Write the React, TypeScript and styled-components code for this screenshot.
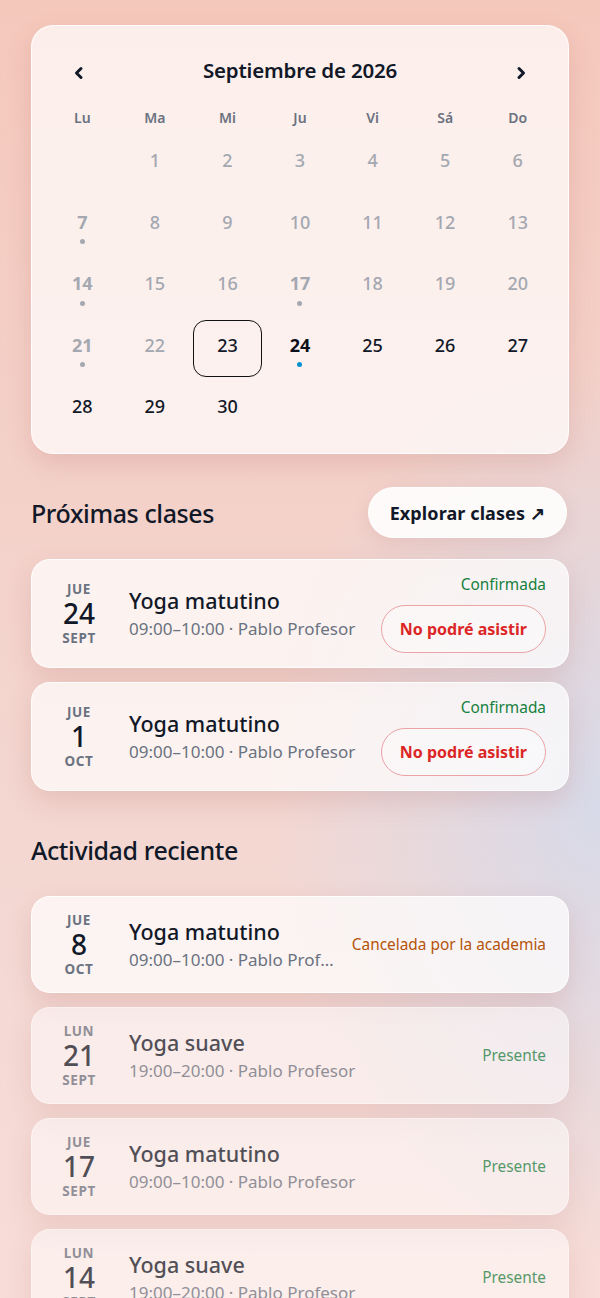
import React from "react";
import styled, { createGlobalStyle } from "styled-components";

const GlobalStyle = createGlobalStyle`
  html, body {
    margin: 0;
    padding: 0;
  }
  body {
    min-height: 100vh;
    font-family: "Noto Sans", "Open Sans", Arial, sans-serif;
    color: #111827;
    background:
      radial-gradient(ellipse 55% 35% at 100% 62%, rgba(214, 218, 234, 0.95) 0%, rgba(214, 218, 234, 0) 100%),
      linear-gradient(180deg, #f5c8bc 0%, #f3d3cc 45%, #f4d9d4 75%, #f7dcd7 100%);
    background-attachment: fixed;
  }
`;

const Page = styled.main`
  display: flex;
  flex-direction: column;
  gap: 33px;
  padding: 25px 31px 40px;
`;

const Glass = styled.section`
  background: rgba(255, 255, 255, 0.7);
  border: 1px solid rgba(255, 255, 255, 0.85);
  box-shadow: 0 10px 26px rgba(170, 90, 85, 0.18);
  box-sizing: border-box;
`;

const CalendarCard = styled(Glass)`
  border-radius: 22px;
  padding: 27px 16px 15px;
`;

const CalHeader = styled.header`
  display: flex;
  align-items: center;
  justify-content: space-between;
  height: 34px;
  padding: 0 15px;
`;

const ArrowButton = styled.button`
  width: 32px;
  height: 32px;
  margin-top: 6px;
  display: flex;
  align-items: center;
  justify-content: center;
  border: none;
  background: none;
  padding: 0;
  color: #111827;
  cursor: pointer;
`;

const MonthTitle = styled.h2`
  margin: 0;
  font-size: 20.5px;
  font-weight: 600;
  letter-spacing: -0.2px;
`;

const WeekRow = styled.div`
  display: grid;
  grid-template-columns: repeat(7, 1fr);
  column-gap: 4px;
  margin-top: 21px;
`;

const WeekDay = styled.span`
  text-align: center;
  font-size: 14px;
  font-weight: 600;
  color: #6b7280;
  line-height: 20px;
`;

const DayGrid = styled.div`
  display: grid;
  grid-template-columns: repeat(7, 1fr);
  grid-auto-rows: 57px;
  gap: 4.5px 4px;
  margin-top: 7px;
`;

type Tone = "past" | "marked" | "future" | "event";

const toneColor: Record<Tone, string> = {
  past: "#a4a8b1",
  marked: "#a4a8b1",
  future: "#111827",
  event: "#0b0f19",
};

const toneWeight: Record<Tone, number> = {
  past: 500,
  marked: 700,
  future: 500,
  event: 700,
};

const DayCell = styled.div<{ $tone: Tone; $selected?: boolean }>`
  position: relative;
  display: flex;
  align-items: center;
  justify-content: center;
  padding-bottom: 7px;
  border-radius: 13px;
  border: 1.5px solid ${(p) => (p.$selected ? "#111" : "transparent")};
  font-size: 18px;
  font-weight: ${(p) => toneWeight[p.$tone]};
  color: ${(p) => toneColor[p.$tone]};
  box-sizing: border-box;
`;

const Dot = styled.span<{ $color: string }>`
  position: absolute;
  left: 50%;
  top: calc(50% + 14px);
  width: 5px;
  height: 5px;
  margin-left: -2.5px;
  border-radius: 50%;
  background: ${(p) => p.$color};
`;

const Section = styled.section`
  display: flex;
  flex-direction: column;
  gap: 21px;
`;

const SectionHead = styled.div`
  display: flex;
  align-items: center;
  justify-content: space-between;
  min-height: 51px;
`;

const SectionTitle = styled.h2`
  margin: 0;
  font-size: 25px;
  font-weight: 500;
  letter-spacing: -0.4px;
  color: #111827;
`;

const ExploreButton = styled.button`
  height: 51px;
  padding: 0 21px;
  border-radius: 26px;
  border: 1px solid rgba(255, 255, 255, 0.9);
  background: rgba(255, 255, 255, 0.88);
  box-shadow: 0 6px 18px rgba(170, 90, 85, 0.14);
  font-family: inherit;
  font-size: 18px;
  font-weight: 700;
  letter-spacing: 0.1px;
  color: #111827;
  margin-right: 2px;
`;

const List = styled.div`
  display: flex;
  flex-direction: column;
  gap: 14px;
`;

const ClassCard = styled(Glass)<{ $faded?: boolean }>`
  display: flex;
  align-items: center;
  gap: 14px;
  border-radius: 19px;
  padding: 14px 22px 14px 20px;
  opacity: ${(p) => (p.$faded ? 0.72 : 1)};
`;

const DateCol = styled.div`
  width: 54px;
  flex: none;
  margin-right: 9px;
  display: flex;
  flex-direction: column;
  align-items: center;
`;

const DateSmall = styled.span`
  font-size: 13.5px;
  font-weight: 700;
  color: #6b7280;
  letter-spacing: 0.6px;
  line-height: 18px;
`;

const DateBig = styled.span`
  font-size: 28px;
  font-weight: 500;
  color: #111827;
  line-height: 31px;
`;

const Info = styled.div`
  flex: 1;
  min-width: 0;
  display: flex;
  flex-direction: column;
  gap: 2px;
`;

const ClassTitle = styled.span`
  font-size: 21.5px;
  font-weight: 500;
  color: #111827;
  line-height: 29px;
`;

const ClassMeta = styled.span`
  font-size: 17px;
  color: #6b7280;
  line-height: 24px;
  white-space: nowrap;
  overflow: hidden;
  text-overflow: ellipsis;
`;

const Side = styled.div`
  flex: none;
  display: flex;
  flex-direction: column;
  align-items: flex-end;
  gap: 10px;
`;

const Status = styled.span<{ $color: string }>`
  font-size: 15.4px;
  color: ${(p) => p.$color};
  line-height: 21px;
`;

const CancelButton = styled.button`
  height: 48px;
  padding: 0 18px;
  border-radius: 24px;
  border: 1.5px solid #eba3a6;
  background: rgba(255, 255, 255, 0.35);
  font-family: inherit;
  font-size: 16px;
  font-weight: 700;
  color: #dc2626;
`;

const Chevron: React.FC<{ dir: "left" | "right" }> = ({ dir }) => (
  <svg width="14" height="14" viewBox="0 0 14 14" fill="none">
    <path
      d={dir === "left" ? "M9 2.5 L4.5 7 L9 11.5" : "M5 2.5 L9.5 7 L5 11.5"}
      stroke="currentColor"
      strokeWidth="3"
      strokeLinecap="round"
      strokeLinejoin="round"
    />
  </svg>
);

const weekDays = ["Lu", "Ma", "Mi", "Ju", "Vi", "Sá", "Do"];
const marked = [7, 14, 17, 21];

interface ClassItem {
  weekday: string;
  day: number;
  month: string;
  title: string;
  meta: string;
  status: string;
  statusColor: string;
  action?: boolean;
  faded?: boolean;
}

const upcoming: ClassItem[] = [
  { weekday: "JUE", day: 24, month: "SEPT", title: "Yoga matutino", meta: "09:00–10:00 · Pablo Profesor", status: "Confirmada", statusColor: "#15803d", action: true },
  { weekday: "JUE", day: 1, month: "OCT", title: "Yoga matutino", meta: "09:00–10:00 · Pablo Profesor", status: "Confirmada", statusColor: "#15803d", action: true },
];

const recent: ClassItem[] = [
  { weekday: "JUE", day: 8, month: "OCT", title: "Yoga matutino", meta: "09:00–10:00 · Pablo Profesor", status: "Cancelada por la academia", statusColor: "#b45309" },
  { weekday: "LUN", day: 21, month: "SEPT", title: "Yoga suave", meta: "19:00–20:00 · Pablo Profesor", status: "Presente", statusColor: "#15803d", faded: true },
  { weekday: "JUE", day: 17, month: "SEPT", title: "Yoga matutino", meta: "09:00–10:00 · Pablo Profesor", status: "Presente", statusColor: "#15803d", faded: true },
  { weekday: "LUN", day: 14, month: "SEPT", title: "Yoga suave", meta: "19:00–20:00 · Pablo Profesor", status: "Presente", statusColor: "#15803d", faded: true },
  { weekday: "JUE", day: 10, month: "SEPT", title: "Yoga matutino", meta: "09:00–10:00 · Pablo Profesor", status: "Presente", statusColor: "#15803d", faded: true },
];

const ClassRow: React.FC<{ item: ClassItem }> = ({ item }) => (
  <ClassCard $faded={item.faded}>
    <DateCol>
      <DateSmall>{item.weekday}</DateSmall>
      <DateBig>{item.day}</DateBig>
      <DateSmall>{item.month}</DateSmall>
    </DateCol>
    <Info>
      <ClassTitle>{item.title}</ClassTitle>
      <ClassMeta>{item.meta}</ClassMeta>
    </Info>
    <Side>
      <Status $color={item.statusColor}>{item.status}</Status>
      {item.action && <CancelButton>No podré asistir</CancelButton>}
    </Side>
  </ClassCard>
);

const dayTone = (d: number): Tone => {
  if (d === 24) return "event";
  if (d > 22) return "future";
  return marked.includes(d) ? "marked" : "past";
};

export default function App() {
  const cells: (number | null)[] = [null];
  for (let d = 1; d <= 30; d++) cells.push(d);

  return (
    <>
      <GlobalStyle />
      <Page>
        <CalendarCard>
          <CalHeader>
            <ArrowButton aria-label="Mes anterior">
              <Chevron dir="left" />
            </ArrowButton>
            <MonthTitle>Septiembre de 2026</MonthTitle>
            <ArrowButton aria-label="Mes siguiente">
              <Chevron dir="right" />
            </ArrowButton>
          </CalHeader>
          <WeekRow>
            {weekDays.map((w) => (
              <WeekDay key={w}>{w}</WeekDay>
            ))}
          </WeekRow>
          <DayGrid>
            {cells.map((d, i) =>
              d === null ? (
                <div key={`e${i}`} />
              ) : (
                <DayCell key={d} $tone={dayTone(d)} $selected={d === 23}>
                  {d}
                  {marked.includes(d) && <Dot $color="#a4a8b1" />}
                  {d === 24 && <Dot $color="#0891d1" />}
                </DayCell>
              )
            )}
          </DayGrid>
        </CalendarCard>

        <Section>
          <SectionHead>
            <SectionTitle>Próximas clases</SectionTitle>
            <ExploreButton>Explorar clases ↗</ExploreButton>
          </SectionHead>
          <List>
            {upcoming.map((c, i) => (
              <ClassRow key={i} item={c} />
            ))}
          </List>
        </Section>

        <Section>
          <SectionHead>
            <SectionTitle>Actividad reciente</SectionTitle>
          </SectionHead>
          <List>
            {recent.map((c, i) => (
              <ClassRow key={i} item={c} />
            ))}
          </List>
        </Section>
      </Page>
    </>
  );
}
